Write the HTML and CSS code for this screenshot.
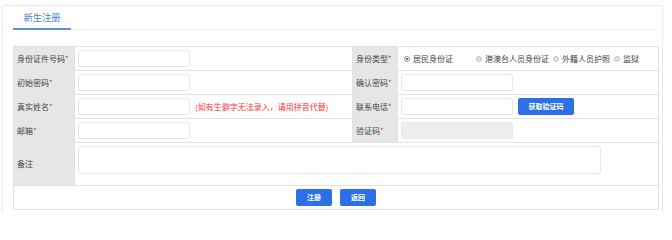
FILE: index.html
```html
<!DOCTYPE html>
<html lang="zh-CN">
<head>
<meta charset="utf-8">
<title>新生注册</title>
<link rel="stylesheet" href="styles.css">
</head>
<body>
<div class="card">
  <div class="tabs">
    <div class="tab active">新生注册</div>
  </div>
  <table class="form">
    <colgroup>
      <col class="c-l1"><col class="c-v1"><col class="c-l2"><col class="c-v2">
    </colgroup>
    <tr>
      <td class="lbl">身份证件号码<i>*</i></td>
      <td><span class="ipt"></span></td>
      <td class="lbl">身份类型<i>*</i></td>
      <td>
        <span class="radios">
          <span class="radio r1"><span class="dot checked"></span>居民身份证</span>
          <span class="radio"><span class="dot"></span>港澳台人员身份证</span>
          <span class="radio"><span class="dot"></span>外籍人员护照</span>
          <span class="radio"><span class="dot"></span>监狱</span>
        </span>
      </td>
    </tr>
    <tr>
      <td class="lbl">初始密码<i>*</i></td>
      <td><span class="ipt"></span></td>
      <td class="lbl">确认密码<i>*</i></td>
      <td><span class="ipt"></span></td>
    </tr>
    <tr>
      <td class="lbl">真实姓名<i>*</i></td>
      <td><span class="ipt"></span><span class="hint">(如有生僻字无法录入，请用拼音代替)</span></td>
      <td class="lbl">联系电话<i>*</i></td>
      <td><span class="ipt"></span><span class="btn btn-code">获取验证码</span></td>
    </tr>
    <tr>
      <td class="lbl">邮箱<i>*</i></td>
      <td><span class="ipt"></span></td>
      <td class="lbl">验证码<i>*</i></td>
      <td><span class="ipt disabled"></span></td>
    </tr>
    <tr class="tall">
      <td class="lbl">备注</td>
      <td colspan="3" class="top"><span class="area"></span></td>
    </tr>
    <tr>
      <td colspan="4" class="actions">
        <span class="btn btn-sm">注册</span><span class="btn btn-sm">返回</span>
      </td>
    </tr>
  </table>
</div>
</body>
</html>
```
FILE: styles.css
```css
html, body {
  margin: 0;
  padding: 0;
  background: #fff;
  height: 212px;
  overflow: hidden;
}
body {
  font-family: "Noto Sans CJK SC", "Noto Sans", sans-serif;
  font-size: 8px;
  color: #444;
  padding-top: 5px;
  box-sizing: border-box;
}
.card {
  margin: 0 0 0 2px;
  width: 661px;
  height: 207px;
  border: 1px solid #ececec;
  border-bottom: 0;
  box-shadow: 0 0 2px rgba(0, 0, 0, 0.06);
  padding: 0 6px 0 10px;
  box-sizing: border-box;
  border-radius: 2px 2px 0 0;
}
.tabs {
  display: flex;
  border-bottom: 1px solid #f0f0f0;
  height: 24px;
  box-sizing: border-box;
}
.tab {
  width: 58px;
  text-align: center;
  font-size: 9.3px;
  line-height: 22px;
  color: #4a7fdc;
  box-sizing: border-box;
}
.tab.active {
  border-bottom: 2px solid #5b8fe2;
  margin-bottom: -1px;
  height: 24px;
}
.form {
  margin-top: 16px;
  width: 645px;
  border-collapse: collapse;
  table-layout: fixed;
}
.c-l1 { width: 61px; }
.c-v1 { width: 278px; }
.c-l2 { width: 45px; }
.c-v2 { width: 261px; }
.form td {
  border: 1px solid #e2e2e2;
  height: 23px;
  padding: 0 3px;
  vertical-align: middle;
  white-space: nowrap;
  line-height: 10px;
}
.form td.lbl {
  background: #e6e6e6;
  color: #444;
  padding-left: 3px;
  padding-right: 0;
}
.form td.lbl i {
  font-style: normal;
  color: #f22;
}
.form tr.tall td {
  height: 39px;
}
.form td.top {
  vertical-align: top;
  padding-top: 3px;
}
.ipt {
  display: inline-block;
  vertical-align: middle;
  width: 112px;
  height: 17px;
  border: 1px solid #e6e6e6;
  border-radius: 2px;
  box-sizing: border-box;
  background: #fff;
}
.ipt.disabled {
  background: #eeeeee;
  border-color: #e9e9e9;
}
.area {
  display: block;
  width: 523px;
  height: 28px;
  border: 1px solid #e6e6e6;
  border-radius: 2px;
  box-sizing: border-box;
}
.hint {
  display: inline-block;
  vertical-align: middle;
  margin-left: 5px;
  color: #f33;
}
.radios {
  display: inline-flex;
  align-items: center;
  padding-left: 3px;
}
.radio {
  display: inline-flex;
  align-items: center;
  margin-right: 4px;
  color: #444;
}
.radio.r1 {
  width: 68px;
}
.dot {
  display: inline-block;
  width: 6px;
  height: 6px;
  border-radius: 50%;
  border: 1px solid #c4c4c4;
  background: #e4e4e4;
  margin-right: 3px;
  box-sizing: border-box;
  position: relative;
}
.dot.checked {
  background: #fff;
  border-color: #999;
}
.dot.checked::after {
  content: "";
  position: absolute;
  left: 1px;
  top: 1px;
  width: 2px;
  height: 2px;
  border-radius: 50%;
  background: #444;
}
.btn {
  display: inline-block;
  vertical-align: middle;
  height: 17px;
  line-height: 17px;
  background: #2c6fe6;
  color: #fff;
  text-align: center;
  border-radius: 2px;
  font-size: 7px;
  font-weight: bold;
  box-sizing: border-box;
}
.btn-code {
  width: 56px;
  margin-left: 5px;
}
.btn-sm {
  width: 36px;
  margin: 0 4px;
}
.form td.actions {
  text-align: center;
  height: 23px;
  background: #fff;
}
```
